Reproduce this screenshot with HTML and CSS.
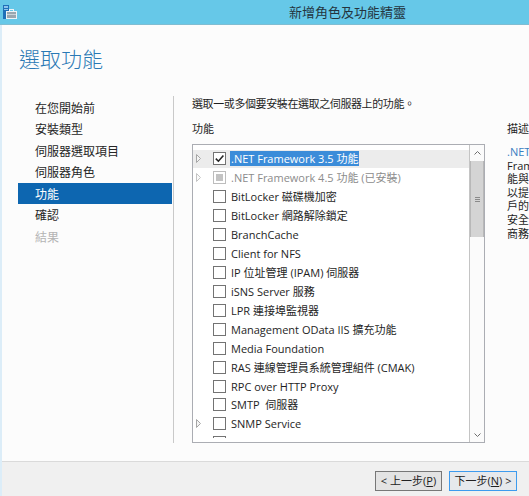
FILE: index.html
```html
<!DOCTYPE html>
<html lang="zh-Hant">
<head>
<meta charset="utf-8">
<title>新增角色及功能精靈</title>
<link rel="stylesheet" href="styles.css">
</head>
<body>
<div class="window">
  <header class="titlebar">
    <svg class="app-icon" viewBox="0 0 16 16" width="16" height="16">
      <rect x="2" y="1" width="6" height="14" fill="#1f70b8"/>
      <rect x="3" y="2" width="4" height="2" fill="#8cc4ec"/>
      <rect x="3" y="5" width="4" height="1" fill="#8cc4ec"/>
      <rect x="5.5" y="7.5" width="10" height="7" fill="#9aa6ae" stroke="#eef3f6" stroke-width="1"/>
      <rect x="8.5" y="5.5" width="4" height="2" fill="none" stroke="#eef3f6" stroke-width="1"/>
      <rect x="6" y="10" width="9" height="1" fill="#c9d2d8"/>
    </svg>
    <div class="title">新增角色及功能精靈</div>
  </header>
  <div class="frame">
    <div class="content">
      <h1 class="heading">選取功能</h1>
      <div class="columns">
        <nav class="steps">
          <div class="step">在您開始前</div>
          <div class="step">安裝類型</div>
          <div class="step">伺服器選取項目</div>
          <div class="step">伺服器角色</div>
          <div class="step active">功能</div>
          <div class="step">確認</div>
          <div class="step disabled">結果</div>
        </nav>
        <div class="divider"></div>
        <main class="main">
          <p class="instr">選取一或多個要安裝在選取之伺服器上的功能。</p>
          <div class="panes">
            <section class="features">
              <div class="label">功能</div>
              <div class="listbox">
                <div class="items">
                  <div class="items-clip">
                    <div class="row hover">
                      <span class="exp"><svg viewBox="0 0 5 9" width="5" height="9"><polygon points="0.5,0.5 4.5,4.5 0.5,8.5" fill="#f4f4f4" stroke="#a6a6a6" stroke-width="1"/></svg></span>
                      <span class="cb"><svg viewBox="0 0 11 11" width="11" height="11"><path d="M1.8 5.6 L4.4 8.2 L9.4 2.4" fill="none" stroke="#262626" stroke-width="1.6"/></svg></span>
                      <span class="text sel">.NET Framework 3.5 功能</span>
                    </div>
                    <div class="row installed">
                      <span class="exp"><svg viewBox="0 0 5 9" width="5" height="9"><polygon points="0.5,0.5 4.5,4.5 0.5,8.5" fill="#fafafa" stroke="#c4c4c4" stroke-width="1"/></svg></span>
                      <span class="cb dim"><span class="fill"></span></span>
                      <span class="text">.NET Framework 4.5 功能 (已安裝)</span>
                    </div>
                    <div class="row"><span class="exp"></span><span class="cb"></span><span class="text">BitLocker 磁碟機加密</span></div>
                    <div class="row"><span class="exp"></span><span class="cb"></span><span class="text">BitLocker 網路解除鎖定</span></div>
                    <div class="row"><span class="exp"></span><span class="cb"></span><span class="text">BranchCache</span></div>
                    <div class="row"><span class="exp"></span><span class="cb"></span><span class="text">Client for NFS</span></div>
                    <div class="row"><span class="exp"></span><span class="cb"></span><span class="text">IP 位址管理 (IPAM) 伺服器</span></div>
                    <div class="row"><span class="exp"></span><span class="cb"></span><span class="text">iSNS Server 服務</span></div>
                    <div class="row"><span class="exp"></span><span class="cb"></span><span class="text">LPR 連接埠監視器</span></div>
                    <div class="row"><span class="exp"></span><span class="cb"></span><span class="text">Management OData IIS 擴充功能</span></div>
                    <div class="row"><span class="exp"></span><span class="cb"></span><span class="text">Media Foundation</span></div>
                    <div class="row"><span class="exp"></span><span class="cb"></span><span class="text">RAS 連線管理員系統管理組件 (CMAK)</span></div>
                    <div class="row"><span class="exp"></span><span class="cb"></span><span class="text">RPC over HTTP Proxy</span></div>
                    <div class="row"><span class="exp"></span><span class="cb"></span><span class="text">SMTP&nbsp; 伺服器</span></div>
                    <div class="row">
                      <span class="exp"><svg viewBox="0 0 5 9" width="5" height="9"><polygon points="0.5,0.5 4.5,4.5 0.5,8.5" fill="#f4f4f4" stroke="#a6a6a6" stroke-width="1"/></svg></span>
                      <span class="cb"></span><span class="text">SNMP Service</span>
                    </div>
                    <div class="row"><span class="exp"></span><span class="cb"></span></div>
                  </div>
                </div>
                <div class="scrollbar">
                  <div class="sb-btn"><svg viewBox="0 0 7 4" width="7" height="4"><path d="M0.5 3.5 L3.5 0.5 L6.5 3.5" fill="none" stroke="#6e6e6e" stroke-width="1"/></svg></div>
                  <div class="thumb"><span class="grip"></span></div>
                  <div class="sb-btn down"><svg viewBox="0 0 7 4" width="7" height="4"><path d="M0.5 0.5 L3.5 3.5 L6.5 0.5" fill="none" stroke="#6e6e6e" stroke-width="1"/></svg></div>
                </div>
              </div>
            </section>
            <section class="desc">
              <div class="label">描述</div>
              <div class="desc-text">
                <div class="line link">.NET Framework 3.5 結合了 .NET</div>
                <div class="line">Framework 2.0 API 的強大功</div>
                <div class="line">能與新技術，可用來建置應用程式，</div>
                <div class="line">以提供吸引人的使用者介面、保護客</div>
                <div class="line">戶的個人身分資訊、啟用順暢且</div>
                <div class="line">安全的通訊，以及提供建立各種</div>
                <div class="line">商務程序模型之能力。</div>
              </div>
            </section>
          </div>
        </main>
      </div>
    </div>
    <footer class="footer">
      <button class="btn">&lt; 上一步(<u>P</u>)</button>
      <button class="btn primary">下一步(<u>N</u>) &gt;</button>
    </footer>
  </div>
</div>
</body>
</html>
```

FILE: styles.css
```css
* {
  box-sizing: border-box;
  margin: 0;
  padding: 0;
}

html, body {
  width: 529px;
  height: 496px;
  overflow: hidden;
}

body {
  font-family: "Open Sans", "Noto Sans CJK TC", sans-serif;
  font-size: 11px;
  color: #1e1e1e;
  background: #fcfcfc;
}

.window {
  display: flex;
  flex-direction: column;
  height: 496px;
}

.titlebar {
  flex: none;
  height: 25px;
  background: #66c8e8;
  border-bottom: 1px solid #80bdd2;
  display: flex;
  align-items: center;
}

.app-icon {
  margin-left: 1px;
  flex: none;
}

.title {
  margin-left: 272px;
  font-family: "Noto Sans CJK TC", sans-serif;
  font-size: 13px;
  line-height: 16px;
  color: #24343e;
  white-space: nowrap;
}

.frame {
  flex: 1;
  display: flex;
  flex-direction: column;
  border-left: 2px solid #dcedf8;
}

.content {
  flex: 1;
  background: #fcfcfc;
}

.heading {
  margin-top: 21px;
  padding-left: 17px;
  font-family: "Noto Sans CJK TC", sans-serif;
  font-size: 21px;
  line-height: 24px;
  font-weight: 300;
  color: #2a79b5;
}

.columns {
  display: flex;
  margin-top: 26px;
}

.steps {
  flex: none;
  width: 154px;
  margin-left: 16px;
  padding-top: 0.5px;
  font-family: "Noto Sans CJK TC", sans-serif;
  font-size: 12px;
}

.step {
  height: 21.5px;
  line-height: 21.5px;
  padding-left: 17px;
  color: #262626;
}

.step.active {
  background: #0d66b0;
  color: #fff;
}

.step.disabled {
  color: #b4b4b4;
}

.divider {
  flex: none;
  width: 1px;
  height: 347px;
  margin-left: 1px;
  background: #c9c9c9;
}

.main {
  flex: 1;
  min-width: 0;
  padding-left: 18px;
}

.instr {
  line-height: 16px;
  letter-spacing: -0.4px;
  white-space: nowrap;
}

.panes {
  display: flex;
  gap: 22px;
  margin-top: 9px;
}

.features {
  flex: none;
  width: 293px;
}

.label {
  height: 16px;
  line-height: 16px;
  white-space: nowrap;
}

.listbox {
  margin-top: 7px;
  height: 299px;
  border: 1px solid #abadb3;
  background: #fff;
  display: flex;
}

.items {
  flex: 1;
  min-width: 0;
  padding: 4.5px 0 4.5px;
}

.items-clip {
  height: 100%;
  overflow: hidden;
}

.row {
  height: 18.93px;
  display: flex;
  align-items: center;
  white-space: nowrap;
}

.row.hover {
  background: #ececec;
}

.exp {
  flex: none;
  width: 20px;
  padding-left: 3px;
  display: flex;
  align-items: center;
}

.cb {
  flex: none;
  width: 13px;
  height: 13px;
  margin-right: 4px;
  border: 1px solid #737373;
  background: #fff;
  display: flex;
  align-items: center;
  justify-content: center;
}

.cb.dim {
  border-color: #bdbdbd;
}

.cb .fill {
  width: 7px;
  height: 7px;
  background: #c3c3c3;
}

.text {
  line-height: 15px;
  padding: 0 1px;
}

.text.sel {
  background: #3b8cd9;
  color: #fff;
}

.row.installed .text {
  color: #8c8c8c;
}

.scrollbar {
  flex: none;
  width: 15px;
  border-left: 1px solid #c4c4c4;
  background: #fbfbfb;
  display: flex;
  flex-direction: column;
}

.sb-btn {
  height: 15px;
  display: flex;
  align-items: center;
  justify-content: center;
}

.sb-btn.down {
  margin-top: auto;
}

.thumb {
  margin-top: 1px;
  height: 76px;
  background: #d4d4d4;
  border-left: 1px solid #b8b8b8;
  border-right: 1px solid #b8b8b8;
  display: flex;
  align-items: center;
  justify-content: center;
}

.grip {
  width: 5px;
  height: 5px;
  border-top: 1px solid #8a8a8a;
  border-bottom: 1px solid #8a8a8a;
  background: linear-gradient(#d4d4d4 0 1.5px, #8a8a8a 1.5px 2.5px, #d4d4d4 2.5px);
}

.desc {
  flex: 1;
  min-width: 0;
}

.desc-text {
  margin-top: 8px;
  line-height: 13.6px;
  white-space: nowrap;
}

.link {
  color: #3a7fc2;
}

.footer {
  flex: none;
  height: 35px;
  border-top: 1px solid #dadada;
  background: #f0f0f0;
  display: flex;
  justify-content: flex-end;
  gap: 7px;
  padding: 9px 12px 0 0;
}

.btn {
  width: 67px;
  height: 20px;
  border: 1px solid #777;
  background: #e3e3e3;
  font-family: "Open Sans", "Noto Sans CJK TC", sans-serif;
  font-size: 11px;
  line-height: 16px;
  color: #222;
  white-space: nowrap;
}

.btn.primary {
  width: 68px;
  border-color: #3d9bee;
  background: #e6e9ec;
}
```
